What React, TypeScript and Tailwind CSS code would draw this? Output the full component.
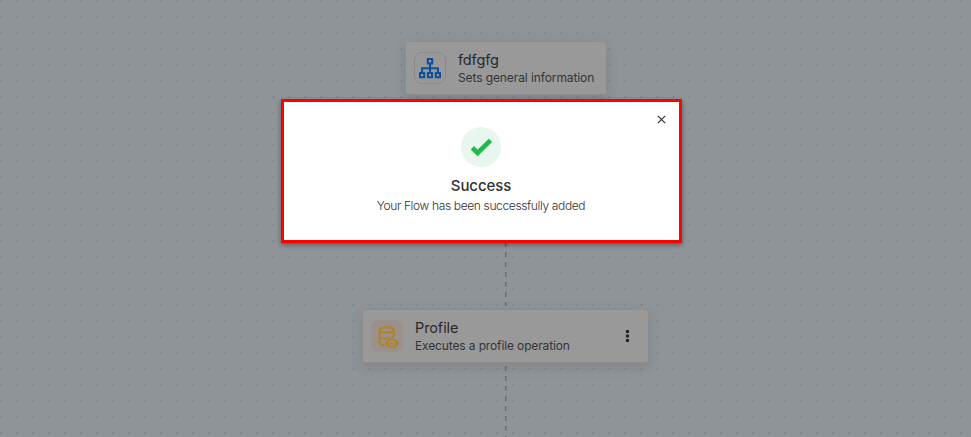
import type { ReactNode } from "react";

function FlowIcon() {
  return (
    <svg width="24" height="24" viewBox="0 0 24 24" fill="none" stroke="#0a509b" strokeWidth="2">
      <path d="M9.800 3h4.400v4.400H9.800zM2 17h4.200v4.200H2zM9.900 17h4.200v4.200H9.900zM17.800 17H22v4.200h-4.200zM12 7.400V17M4.100 17v-4.800h15.800V17" />
    </svg>
  );
}

function ProfileIcon() {
  return (
    <svg className="overflow-visible" width="24" height="24" viewBox="0 0 24 24" fill="none" stroke="#b28224" strokeWidth="1.900">
      <ellipse cx="11.700" cy="5.900" rx="7.200" ry="2.700" />
      <path d="M4.500 5.900v12.600c0 1.500 2 2.300 4.800 2.700M18.900 5.900v6.200M4.500 11.900c0 1.600 3.100 2.700 7.200 2.700 3.600 0 6.200-.9 7-2.300" />
      <path fill="#b28224" stroke="#999084" strokeWidth="1" d="M10.100 19.300c1.300-3.200 4-5.200 7.100-5.200s5.800 2 7.100 5.200c-1.300 3.200-4 5.200-7.100 5.200s-5.800-2-7.100-5.200Z" />
      <circle cx="17.200" cy="19.300" r="2.400" fill="#b28224" stroke="#a09482" strokeWidth="1.500" />
    </svg>
  );
}

type NodeProps = { title: string; subtitle: string; icon: ReactNode; className: string; tile: string; subtitleClass: string; menu?: boolean };

function FlowNode({ title, subtitle, icon, className, tile, subtitleClass, menu }: NodeProps) {
  return (
    <div className={`absolute flex h-[54px] items-center rounded-[3px] border border-[#8d8d8d] bg-[#999] pl-2 shadow-[0_4px_12px_rgba(65,60,60,0.18)] ${className}`}>
      <div className={`flex size-8 shrink-0 items-center justify-center rounded-lg ${tile}`}>{icon}</div>
      <div className="ml-3 flex-1 whitespace-nowrap">
        <div className="text-[14.5px] leading-[18px] tracking-[-0.1px] text-[#29292c]">{title}</div>
        <div className={`text-xs leading-[17px] text-[#343436] ${subtitleClass}`}>{subtitle}</div>
      </div>
      {menu && (
        <svg className="mr-[17px]" width="8" height="16" fill="#202024">
          <circle cx="4.500" cy="3.500" r="1.700" /><circle cx="4.500" cy="8" r="1.700" /><circle cx="4.500" cy="12.500" r="1.700" />
        </svg>
      )}
    </div>
  );
}

export default function App() {
  return (
    <main className="relative h-[437px] w-[971px] overflow-hidden bg-[#8f9498] font-['Inter','Liberation_Sans',sans-serif]">
      <svg className="absolute inset-0" width="971" height="437">
        <defs>
          <pattern id="dots" width="16" height="16" patternUnits="userSpaceOnUse">
            <circle cx="1.500" cy="0.900" r="0.700" fill="#64696c" />
          </pattern>
        </defs>
        <rect width="971" height="437" fill="url(#dots)" />
        <path d="M505.700 242V306M505.700 366V437" stroke="#6b6e70" strokeWidth="1.500" strokeDasharray="5 5" />
      </svg>
      <FlowNode title="fdfgfg" subtitle="Sets general information" icon={<FlowIcon />} className="left-[405px] top-[41px] w-[202px]" tile="border border-[#898989]" subtitleClass="tracking-[-0.1px]" />
      <FlowNode title="Profile" subtitle="Executes a profile operation" icon={<ProfileIcon />} className="left-[362px] top-[309px] w-[287px]" tile="bg-[#99918a]" subtitleClass="tracking-[-0.13px]" menu />
      <section role="dialog" className="absolute left-[281px] top-[99px] flex h-[144px] w-[401px] flex-col items-center border-[3px] border-[#ff0000] bg-white pr-px pt-[25px] shadow-[0_2px_5px_rgba(0,0,0,0.4)]">
        <button aria-label="Close" className="absolute right-[13px] top-[13px]">
          <svg className="block" width="9" height="9" stroke="#303033" strokeWidth="1.200"><path d="m.8.8 7.400 7.400M8.200.8.8 8.200" /></svg>
        </button>
        <div className="flex size-10 items-center justify-center rounded-full bg-[#e8f7ed]">
          <svg width="24" height="24" fill="none" stroke="#20b94a" strokeWidth="4.700"><path d="m3.300 12.800 5.300 5.200L21.500 5.300" /></svg>
        </div>
        <h1 className="mt-2 whitespace-nowrap text-[15px] font-medium leading-[22px] tracking-[-0.1px] text-[#303033]">Success</h1>
        <p className="whitespace-nowrap text-xs font-light leading-[18px] tracking-[-0.36px] text-[#303033]">Your Flow has been successfully added</p>
      </section>
    </main>
  );
}
